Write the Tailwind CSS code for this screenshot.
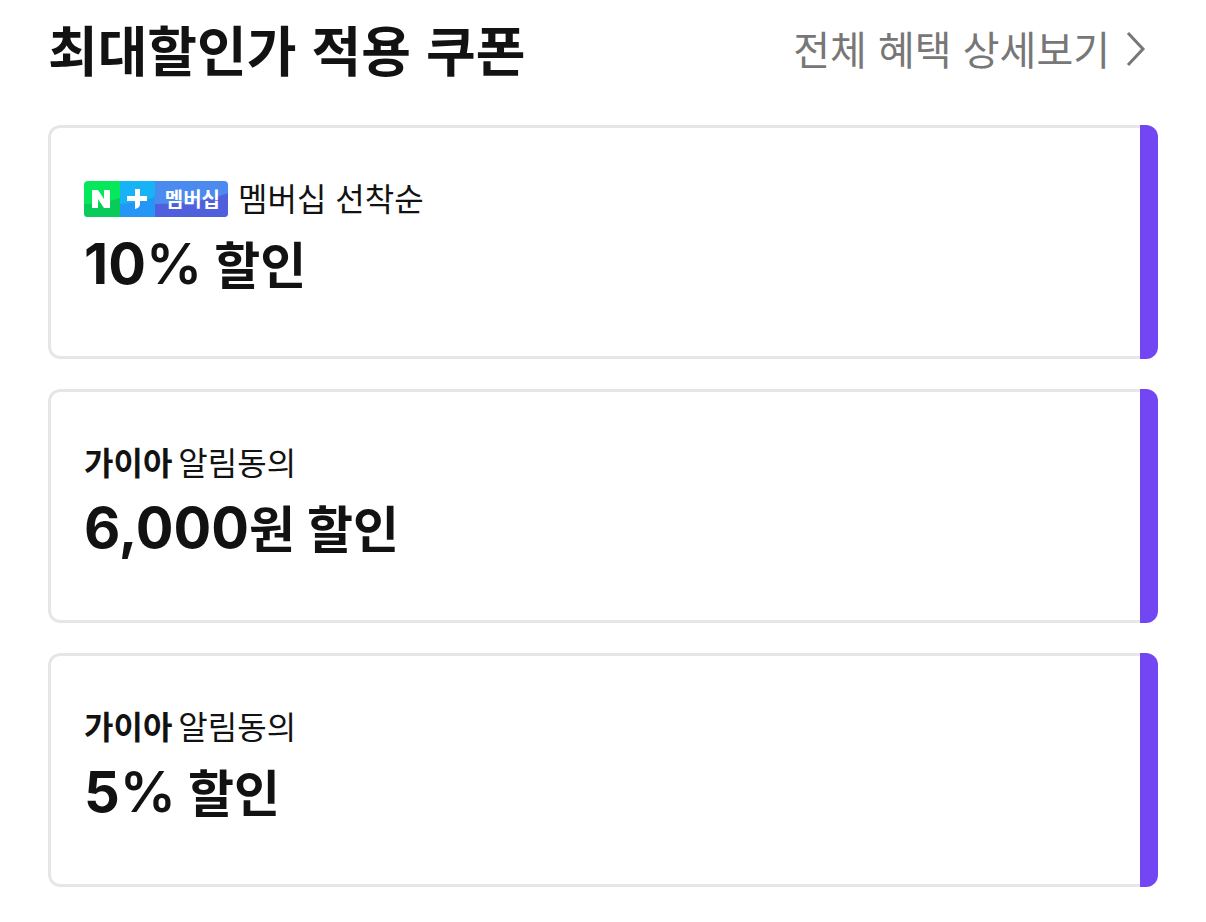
<!DOCTYPE html>
<html lang="ko">
<head>
<meta charset="utf-8">
<meta name="viewport" content="width=device-width, initial-scale=1">
<title>최대할인가 적용 쿠폰</title>
<script src="https://cdn.jsdelivr.net/npm/@tailwindcss/browser@4"></script>
</head>
<body class="bg-white font-['Noto_Sans_CJK_KR',sans-serif] text-[#121212]">
<main class="px-12 pb-9">
  <header class="flex items-center justify-between pt-[10px] pb-[38px] pr-3">
    <h1 class="text-[54px] leading-[77px] font-bold">최대할인가 적용 쿠폰</h1>
    <a href="#" class="flex items-center gap-4 text-[40px] leading-[77px] text-[#777]">전체 혜택 상세보기
      <svg class="h-9 w-5" viewBox="0 0 20 36" fill="none" stroke="currentColor" stroke-width="3" aria-hidden="true"><path d="M2 2l15 16L2 34"/></svg>
    </a>
  </header>
  <ul class="flex flex-col gap-[30px]">
    <li class="flex h-[234px] overflow-hidden rounded-xl">
      <div class="grow rounded-l-xl border-3 border-r-0 border-[#e6e6e6] px-[33px] pt-[45px]">
        <p class="flex items-center gap-[10px] text-[32px] leading-12">
          <span class="relative flex h-9 w-36 shrink-0 translate-y-0.5 items-center justify-end overflow-hidden rounded-sm">
            <svg class="absolute inset-0 h-9 w-36" viewBox="0 0 144 36" aria-hidden="true">
              <path fill="#05e85b" d="M0 0h36v36H0z"/><path fill="#17b3f6" d="M36 0h35v36H36z"/><path fill="#4b8aef" d="M71 0h73v36H71z"/>
              <path fill="#09cb59" d="M0 23Q18 23 36 17v19H0z"/><path fill="#2496f6" d="M36 23Q54 22 71 16v20H36z"/><path fill="#5060dc" d="M71 23Q115 23 144 12v24H71z"/>
              <path fill="#fff" d="M8 9h6l6 9V9h6v18h-6l-6-9v9H8zM51 8h5v7h7v5h-7v3q0 4-5 5v-8h-8v-5h8z"/>
            </svg>
            <span class="relative pr-2 text-[20px] leading-9 font-bold text-white">멤버십</span>
          </span>
          멤버십 선착순
        </p>
        <p class="flex items-baseline gap-3 text-[50px] leading-[82px] font-bold"><span class="font-['Inter',sans-serif] text-[56px]">10<span class="font-semibold">%</span></span><span>할인</span></p>
      </div>
      <div class="w-[18px] bg-[#7346f3]"></div>
    </li>
    <li class="flex h-[234px] overflow-hidden rounded-xl">
      <div class="grow rounded-l-xl border-3 border-r-0 border-[#e6e6e6] px-[33px] pt-[45px]">
        <p class="flex gap-[6px] text-[32px] leading-12"><b>가이아</b><span>알림동의</span></p>
        <p class="flex items-baseline gap-3 text-[50px] leading-[82px] font-bold"><span><span class="font-['Inter',sans-serif] text-[56px]">6,000</span>원</span><span>할인</span></p>
      </div>
      <div class="w-[18px] bg-[#7346f3]"></div>
    </li>
    <li class="flex h-[234px] overflow-hidden rounded-xl">
      <div class="grow rounded-l-xl border-3 border-r-0 border-[#e6e6e6] px-[33px] pt-[45px]">
        <p class="flex gap-[6px] text-[32px] leading-12"><b>가이아</b><span>알림동의</span></p>
        <p class="flex items-baseline gap-3 text-[50px] leading-[82px] font-bold"><span class="font-['Inter',sans-serif] text-[56px]">5<span class="font-semibold">%</span></span><span>할인</span></p>
      </div>
      <div class="w-[18px] bg-[#7346f3]"></div>
    </li>
  </ul>
</main>
</body>
</html>
